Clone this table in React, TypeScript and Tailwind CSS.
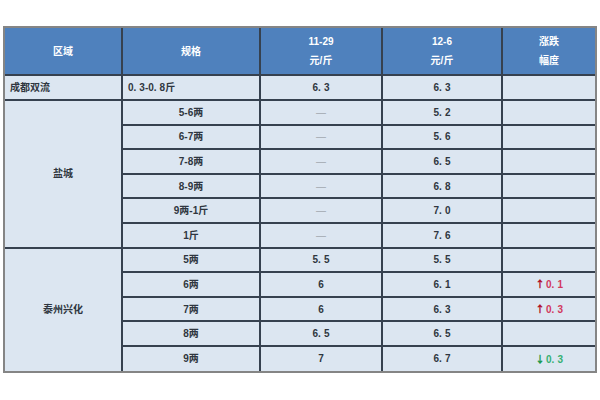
import React from "react"

interface Row {
    spec: string
    before: string
    after: string
    change?: { dir: "up" | "down"; value: string }
}

interface Group {
    region: string
    align: "left" | "center"
    rows: Row[]
}

const groups: Group[] = [
    {
        region: "成都双流",
        align: "left",
        rows: [{ spec: "0.3-0.8斤", before: "6.3", after: "6.3" }],
    },
    {
        region: "盐城",
        align: "center",
        rows: [
            { spec: "5-6两", before: "—", after: "5.2" },
            { spec: "6-7两", before: "—", after: "5.6" },
            { spec: "7-8两", before: "—", after: "6.5" },
            { spec: "8-9两", before: "—", after: "6.8" },
            { spec: "9两-1斤", before: "—", after: "7.0" },
            { spec: "1斤", before: "—", after: "7.6" },
        ],
    },
    {
        region: "泰州兴化",
        align: "center",
        rows: [
            { spec: "5两", before: "5.5", after: "5.5" },
            { spec: "6两", before: "6", after: "6.1", change: { dir: "up", value: "0.1" } },
            { spec: "7两", before: "6", after: "6.3", change: { dir: "up", value: "0.3" } },
            { spec: "8两", before: "6.5", after: "6.5" },
            { spec: "9两", before: "7", after: "6.7", change: { dir: "down", value: "0.3" } },
        ],
    },
]

const cell = "border-2 border-[#36414f] bg-[#dce6f1] px-[5px] py-0 align-middle"
const head = "border-2 border-[#36414f] bg-[#4f81bd] text-white text-center align-middle"

const Num: React.FC<{ text: string }> = ({ text }) => {
    const parts = text.split(".")
    return (
        <>
            {parts.map((p, i) => (
                <React.Fragment key={i}>
                    {i > 0 && <span className="mr-[3px]">.</span>}
                    {p}
                </React.Fragment>
            ))}
        </>
    )
}

const Change: React.FC<{ change?: Row["change"] }> = ({ change }) => {
    if (!change) return null
    const up = change.dir === "up"
    return (
        <span>
            <span
                className={(up ? "text-[#b0102a]" : "text-[#1f9a52]") + " font-black mr-[1px]"}
                style={{ fontFamily: '"Noto Sans CJK SC", sans-serif' }}
            >
                {up ? "↑" : "↓"}
            </span>
            <span className={up ? "text-[#d2385c]" : "text-[#36b071]"}>
                <Num text={change.value} />
            </span>
        </span>
    )
}

export default function App() {
    return (
        <div className="w-[600px] h-[400px] bg-white pt-[26px] pl-[3px]">
            <div className="w-[594px] border-2 border-[#858585]">
                <table
                    className="w-full border-collapse border-hidden table-fixed text-[10px] font-bold text-[#2f3640]"
                    style={{ fontFamily: '"Liberation Sans", "Noto Sans CJK SC", sans-serif' }}
                >
                    <colgroup>
                        <col className="w-[117px]" />
                        <col className="w-[138px]" />
                        <col className="w-[122px]" />
                        <col className="w-[120px]" />
                        <col />
                    </colgroup>
                    <thead>
                        <tr className="h-[47px]">
                            <th className={head}>区域</th>
                            <th className={head}>规格</th>
                            <th className={head + " leading-[19px]"}>
                                11-29<br />元/斤
                            </th>
                            <th className={head + " leading-[19px]"}>
                                12-6<br />元/斤
                            </th>
                            <th className={head + " leading-[19px]"}>
                                涨跌<br />幅度
                            </th>
                        </tr>
                    </thead>
                    <tbody>
                        {groups.map(g =>
                            g.rows.map((r, i) => (
                                <tr key={g.region + r.spec} className={g.align === "left" ? "h-[25px]" : "h-[24.6px]"}>
                                    {i === 0 && (
                                        <td
                                            rowSpan={g.rows.length}
                                            className={cell + (g.align === "left" ? " text-left" : " text-center")}
                                        >
                                            {g.region}
                                        </td>
                                    )}
                                    <td className={cell + (g.align === "left" ? " text-left" : " text-center")}>
                                        <Num text={r.spec} />
                                    </td>
                                    <td className={cell + " text-center" + (r.before === "—" ? " text-[#a0a6ae] font-normal" : "")}>
                                        <Num text={r.before} />
                                    </td>
                                    <td className={cell + " text-center"}>
                                        <Num text={r.after} />
                                    </td>
                                    <td className={cell + " text-center"}>
                                        <Change change={r.change} />
                                    </td>
                                </tr>
                            ))
                        )}
                    </tbody>
                </table>
            </div>
        </div>
    )
}
